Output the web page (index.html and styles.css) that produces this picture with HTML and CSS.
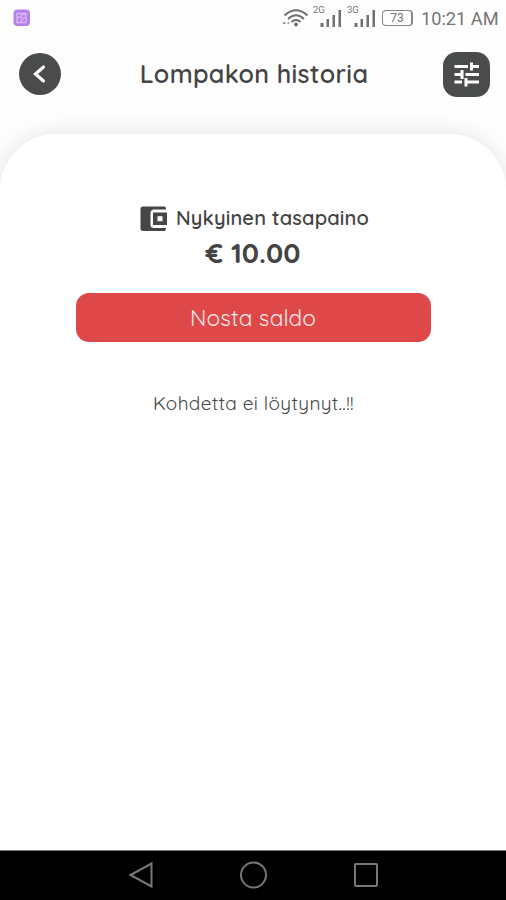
FILE: index.html
```html
<!DOCTYPE html>
<html lang="fi">
<head>
  <meta charset="UTF-8">
  <title>Lompakon historia</title>
  <link rel="stylesheet" href="styles.css">
</head>
<body>
<div class="screen">
  <div class="status-bar">
    <svg class="app-icon" width="18" height="18" viewBox="0 0 18 18">
      <rect x="0.5" y="0.5" width="16.5" height="16.5" rx="4" fill="#b880ea"/>
      <path d="M4 4.5h9v9H4zM4.5 8.5h4M8.5 5v4M7 13l5-5M10 5.5h2.5" fill="none" stroke="#d9b8f6" stroke-width="1.3"/>
    </svg>
    <div class="status-right">
      <svg class="wifi" width="27" height="20" viewBox="0 0 27 20" fill="none" stroke="#707070" stroke-width="2">
        <path d="M2.500 7.500Q14 -3 25.500 7.500M6 11Q14 3.500 22 11M9.500 14Q14 10 18.500 14"/>
        <circle cx="14" cy="16.500" r="2" fill="#707070" stroke="none"/>
        <path d="M1 15h2.500M5.500 15h1.500" stroke="#999"/>
      </svg>
      <div class="signal">
        <span>2G</span>
        <svg width="21" height="18" viewBox="0 0 21 18" fill="#707070">
          <path d="M0.500 14h3v4H0.500zM6.500 10H9v8H6.500zM12.500 6H15v12H12.500zM18.500 1H21v17H18.500z"/>
        </svg>
      </div>
      <div class="signal">
        <span>3G</span>
        <svg width="21" height="18" viewBox="0 0 21 18" fill="#707070">
          <path d="M0.500 14h3v4H0.500zM6.500 10H9v8H6.500zM12.500 6H15v12H12.500zM18.500 1H21v17H18.500z"/>
        </svg>
      </div>
      <div class="battery">73</div>
      <div class="clock">10:21 AM</div>
    </div>
  </div>

  <div class="header">
    <button class="back-btn">
      <svg width="42" height="42" viewBox="0 0 42 42">
        <path d="M24.500 14L16.500 21L24.500 28" fill="none" stroke="#fff" stroke-width="3.200" stroke-linecap="round"/>
      </svg>
    </button>
    <h1>Lompakon historia</h1>
    <button class="filter-btn">
      <svg width="46" height="45" viewBox="0 0 46 45" fill="none" stroke="#fff" stroke-width="3">
        <path d="M11.500 14.500H25M28.500 14.500H36M28.500 10.500V18.500M11.500 22.500H19M19 18V27M22.500 22.500H36M11.500 30H19M23 30H36M23 26V34.500"/>
      </svg>
    </button>
  </div>

  <div class="card">
    <div class="balance-label">
      <svg width="28" height="26" viewBox="0 0 28 26">
        <path d="M3 0.500H24.500Q26 0.500 26 3.500H14Q10.500 3.500 10.500 7V18.500Q10.500 22 14 22H26Q26 25 24.500 25H3Q0.500 25 0.500 22.500V3Q0.500 0.500 3 0.500Z" fill="#464646"/>
        <path d="M13 6.500H27V19H13ZM17.500 10.300V15.200H22.500V10.300Z" fill="#464646" fill-rule="evenodd"/>
      </svg>
      <span>Nykyinen tasapaino</span>
    </div>
    <p class="balance">€ 10.00</p>
    <button class="withdraw-btn">Nosta saldo</button>
    <p class="empty">Kohdetta ei löytynyt..!!</p>
  </div>

  <div class="nav-bar">
    <svg width="28" height="28" viewBox="0 0 28 28">
      <path d="M4.500 14L25.500 2.500V25.500Z"/>
    </svg>
    <svg width="28" height="28" viewBox="0 0 28 28">
      <circle cx="14.500" cy="14" r="12.500"/>
    </svg>
    <svg width="28" height="28" viewBox="0 0 28 28">
      <rect x="3" y="3" width="22" height="22" rx="1"/>
    </svg>
  </div>
</div>
</body>
</html>
```
FILE: styles.css
```css
* {
  box-sizing: border-box;
}

body {
  margin: 0;
  background-color: #fefefe;
  font-family: Quicksand, Lato, sans-serif;
  color: #444;
}

.screen {
  display: flex;
  flex-direction: column;
  height: 900px;
  overflow: hidden;
}

.status-bar {
  display: flex;
  justify-content: space-between;
  align-items: center;
  height: 36px;
  padding: 0 8px 0 13px;
  font-family: Roboto, sans-serif;
  color: #757575;
}

.status-right {
  display: flex;
  align-items: center;
}

.wifi {
  margin-right: 4px;
}

.signal {
  display: flex;
  align-items: flex-end;
  height: 20px;
  margin-right: 6px;
  padding-bottom: 1px;
}

.signal span {
  align-self: flex-start;
  width: 13px;
  margin-top: -3px;
  margin-right: -6px;
  font-size: 9.5px;
  line-height: 10px;
}

.battery {
  width: 31px;
  height: 16px;
  margin: 0 8px 0 1px;
  border: 1.5px solid #858585;
  border-right-width: 2px;
  border-radius: 4px;
  font-size: 12px;
  line-height: 14px;
  text-align: center;
}

.clock {
  width: 77px;
  font-size: 18.2px;
  white-space: nowrap;
}

.header {
  display: flex;
  justify-content: space-between;
  align-items: center;
  height: 76px;
  padding: 0 16px 0 19px;
}

button {
  border: none;
  padding: 0;
  font-family: inherit;
}

button svg {
  display: block;
}

.back-btn {
  width: 42px;
  height: 42px;
  border-radius: 50%;
  background-color: #4a4c4c;
}

.filter-btn {
  width: 47px;
  height: 45px;
  border-radius: 14px;
  background-color: #4a4c4c;
}

h1 {
  margin: 0;
  padding: 0 0 2px 4px;
  font-size: 25px;
  font-weight: 600;
  letter-spacing: 0.35px;
  white-space: nowrap;
}

.card {
  display: flex;
  flex-direction: column;
  align-items: center;
  flex: 1;
  margin-top: 22px;
  padding-top: 71px;
  background-color: #fff;
  border-radius: 56px 56px 0 0;
  box-shadow: 0 0 24px rgba(0, 0, 0, 0.11);
}

.balance-label {
  display: flex;
  align-items: center;
  gap: 8px;
  height: 28px;
  padding-left: 3px;
  font-size: 20px;
  font-weight: 600;
  letter-spacing: 0.15px;
  white-space: nowrap;
}

.balance-label span {
  padding-bottom: 3px;
}

.balance {
  margin: 3px 0 1px;
  font-size: 28px;
  line-height: 34px;
  font-weight: bold;
}

.withdraw-btn {
  width: 355px;
  height: 49px;
  margin-top: 22px;
  border-radius: 13px;
  background-color: #de4848;
  color: #fbe8e8;
  font-size: 22.5px;
  letter-spacing: 0.15px;
}

.empty {
  margin: 48px 0 0;
  padding-left: 1px;
  font-size: 19px;
  line-height: 26px;
  letter-spacing: 0.35px;
}

.nav-bar {
  position: relative;
  display: flex;
  justify-content: center;
  gap: 85px;
  height: 50px;
  padding-top: 10px;
  border-top: 1px solid #777;
  background-color: #000;
}

.nav-bar svg {
  fill: none;
  stroke: #777;
  stroke-width: 2;
}
```
